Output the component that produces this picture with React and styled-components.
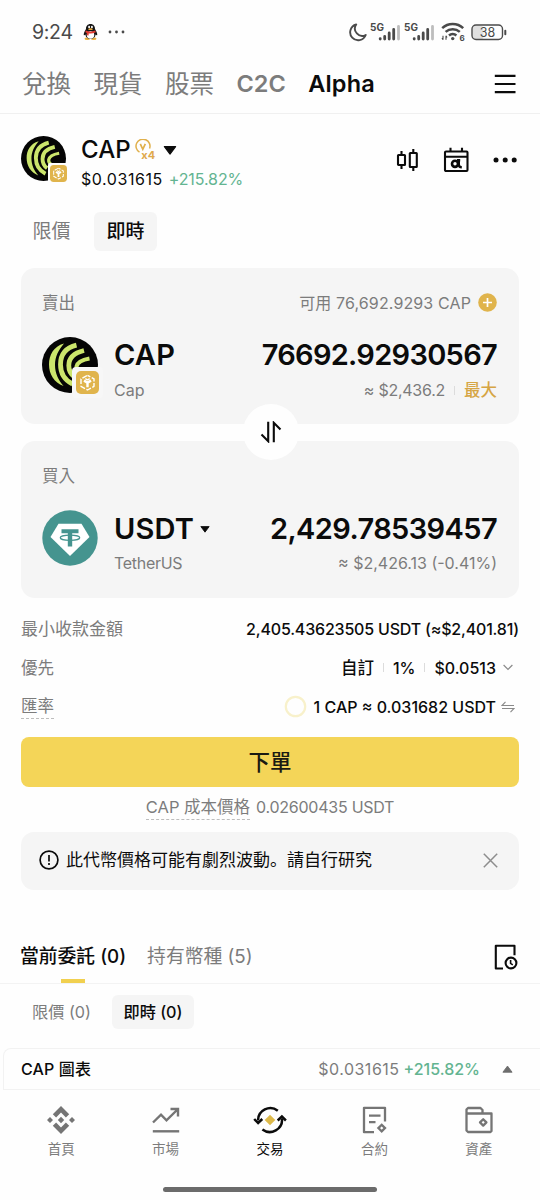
import React, { useState } from 'react';
import styled, { createGlobalStyle } from 'styled-components';

const GlobalStyle = createGlobalStyle`
  * {
    box-sizing: border-box;
  }

  body {
    margin: 0;
    background: #fefefe;
    color: #0b0b0b;
    font-family: Inter, 'Noto Sans CJK TC', sans-serif;
    font-size: 16px;
    -webkit-font-smoothing: antialiased;
  }

  svg {
    display: block;
    flex: none;
  }

  button {
    font: inherit;
    color: inherit;
    border: none;
    background: none;
    padding: 0;
    cursor: pointer;
  }
`;

const Screen = styled.div`
  width: 540px;
  height: 1200px;
  display: flex;
  flex-direction: column;
  overflow: hidden;
  background: #fefefe;
`;

const Text = styled.span`
  font-size: ${(p) => p.$size || 16}px;
  font-weight: ${(p) => p.$weight || 400};
  letter-spacing: ${(p) => p.$track || 0}px;
  color: ${(p) => p.$color || '#0b0b0b'};
  line-height: ${(p) => p.$line || 24}px;
  white-space: nowrap;
`;

const StatusBar = styled.div`
  height: 60px;
  padding: 4px 33px 0 32px;
  display: flex;
  align-items: center;
  justify-content: space-between;
`;

const StatusGroup = styled.div`
  display: flex;
  align-items: center;
  gap: ${(p) => p.$gap}px;
`;

const TopNav = styled.nav`
  height: 54px;
  padding: 0 24px 6px 22px;
  display: flex;
  align-items: center;
  border-bottom: 1px solid #f0f0f0;
`;

const NavItem = styled.button`
  margin-right: 22.5px;
  font-size: ${(p) => p.$size || 24.5}px;
  font-weight: ${(p) => p.$weight || 400};
  letter-spacing: ${(p) => p.$track || 0}px;
  line-height: 36px;
  color: ${(p) => (p.$active ? '#0b0b0b' : '#7c7c7c')};
`;

const Spacer = styled.div`
  flex: 1;
`;

const Header = styled.header`
  height: 98px;
  padding: 20px 22px 0 21px;
  display: flex;
  align-items: flex-start;
`;

const HeaderText = styled.div`
  margin-left: 15px;
  display: flex;
  flex-direction: column;
`;

const Row = styled.div`
  display: flex;
  align-items: center;
  gap: ${(p) => p.$gap || 0}px;
  padding-right: ${(p) => p.$end || 0}px;
`;

const HeaderIcons = styled.div`
  height: 52px;
  display: flex;
  align-items: center;
  gap: 24px;
`;

const LogoBox = styled.div`
  position: relative;
  width: ${(p) => p.$size}px;
  height: ${(p) => p.$size}px;
  margin-top: 2px;
`;

const ChainBadge = styled.div`
  position: absolute;
  right: ${(p) => p.$shift}px;
  bottom: ${(p) => p.$shift}px;
  padding: ${(p) => p.$ring}px;
  border-radius: ${(p) => p.$ring}px;
  background: ${(p) => p.$bg};
`;

const ModeTabs = styled.div`
  height: 39px;
  padding-left: 21px;
  display: flex;
`;

const ModeTab = styled.button`
  width: ${(p) => (p.$active ? 63 : 61)}px;
  margin-right: 12px;
  height: 39px;
  border-radius: 6px;
  font-size: 19px;
  line-height: 38px;
  font-weight: ${(p) => (p.$active ? 500 : 400)};
  color: ${(p) => (p.$active ? '#0b0b0b' : '#7c7c7c')};
  background: ${(p) => (p.$active ? '#f5f5f5' : 'transparent')};
`;

const Cards = styled.section`
  position: relative;
  margin: 17px 21px 0;
  display: flex;
  flex-direction: column;
  gap: 17px;
`;

const Card = styled.div`
  height: ${(p) => p.$height}px;
  padding: 22px 22px 0 21px;
  border-radius: 14px;
  background: #f5f5f5;
`;

const CardHead = styled.div`
  height: 25px;
  display: flex;
  align-items: center;
  justify-content: space-between;
`;

const CardBody = styled.div`
  margin-top: 20px;
  display: flex;
  align-items: flex-start;
`;

const CardCol = styled.div`
  display: flex;
  flex-direction: column;
  align-items: ${(p) => (p.$end ? 'flex-end' : 'flex-start')};
  margin-left: ${(p) => (p.$end ? 'auto' : '16px')};
  padding-top: ${(p) => p.$drop || 0}px;
  gap: ${(p) => 3 - (p.$drop || 0)}px;
`;

const Divider = styled.i`
  width: 1px;
  height: 9px;
  background: #dcdcdc;
`;

const SwapButton = styled.button`
  position: absolute;
  left: 50%;
  top: 136px;
  width: 56px;
  height: 56px;
  margin-left: -27.5px;
  border-radius: 50%;
  background: #fefefe;
  display: flex;
  align-items: center;
  justify-content: center;
`;

const Details = styled.section`
  margin: 11px 21px 0;
`;

const DetailRow = styled.div`
  height: 39px;
  display: flex;
  align-items: center;
  justify-content: space-between;
`;

const Dotted = styled.span`
  font-size: 16.5px;
  line-height: 24px;
  color: #7c7c7c;
  border-bottom: 1px dashed #bdbdbd;
`;

const Submit = styled.button`
  margin: 11px 21px 0;
  height: 50px;
  flex: none;
  border-radius: 8px;
  background: #f4d558;
  font-size: 21.5px;
  line-height: 50px;
  font-weight: 500;
  color: #1a1a12;
`;

const Cost = styled.div`
  height: 45px;
  padding-top: 8px;
  display: flex;
  align-items: flex-start;
  justify-content: center;
  gap: 6px;
`;

const Notice = styled.div`
  margin: 0 21px;
  height: 58px;
  padding: 0 21px 2px 18px;
  border-radius: 13px;
  background: #f5f5f5;
  display: flex;
  align-items: center;
`;

const NoticeText = styled.span`
  font-family: Inter, 'Noto Sans CJK SC', sans-serif;
  font-size: 17px;
  line-height: 24px;
  white-space: nowrap;
`;

const OrderTabs = styled.div`
  margin-top: 40px;
  height: 54px;
  padding: 0 22px 0 20px;
  display: flex;
  border-bottom: 1px solid #f3f3f3;
`;

const OrderTab = styled.button`
  position: relative;
  height: 53px;
  margin-right: 21px;
  font-size: 18.8px;
  line-height: 54px;
  font-weight: ${(p) => (p.$active ? 500 : 400)};
  color: ${(p) => (p.$active ? '#0b0b0b' : '#7c7c7c')};

  &::after {
    content: '';
    position: absolute;
    display: ${(p) => (p.$active ? 'block' : 'none')};
    left: 50%;
    bottom: 0;
    width: 24px;
    height: 4px;
    margin-left: -12px;
    background: #f1d04f;
  }
`;

const SubTabs = styled.div`
  height: 64px;
  padding: 11px 21px 0;
  display: flex;
`;

const SubTab = styled.button`
  width: ${(p) => (p.$active ? 82 : 81)}px;
  height: 34px;
  margin-right: 10px;
  border-radius: 6px;
  font-size: 16.2px;
  line-height: 34px;
  font-weight: ${(p) => (p.$active ? 500 : 400)};
  color: ${(p) => (p.$active ? '#0b0b0b' : '#7c7c7c')};
  background: ${(p) => (p.$active ? '#f5f5f5' : 'transparent')};
`;

const ChartBar = styled.div`
  height: 42px;
  padding: 0 27px 0 17px;
  margin: 0 0 0 3px;
  border: 1px solid #f2f2f2;
  border-right: none;
  border-radius: 8px 0 0 0;
  display: flex;
  align-items: center;
`;

const TabBar = styled.nav`
  height: 95px;
  padding: 16px 9px 0;
  display: flex;
`;

const TabItem = styled.button`
  flex: 1;
  display: flex;
  flex-direction: column;
  align-items: center;
  gap: 3px;
  font-size: 13.5px;
  line-height: 25px;
  color: ${(p) => (p.$active ? '#0b0b0b' : '#7c7c7c')};
`;

const HomeIndicator = styled.div`
  width: 214px;
  height: 5px;
  margin: 2px auto 0;
  border-radius: 3px;
  background: #6b6b6b;
`;

const Penguin = () => (
  <svg width="15" height="18" viewBox="0 0 16 18">
    <ellipse cx="4.6" cy="16.2" rx="3" ry="1.3" fill="#e9b03c" />
    <ellipse cx="11.4" cy="16.2" rx="3" ry="1.3" fill="#e9b03c" />
    <path d="M8 .4C4.9.4 3.1 2.8 3.2 5.8 2 8 .6 10 .8 12.2c.4.8 1.2 0 1.7-.6C3 14.6 5 16.4 8 16.4s5-1.8 5.5-4.8c.5.6 1.3 1.4 1.7.6.2-2.2-1.2-4.2-2.4-6.400C12.900 2.800 11.100.4 8 .4z" fill="#151515" />
    <ellipse cx="8" cy="12.2" rx="4" ry="3.9" fill="#fff" />
    <ellipse cx="6.5" cy="3.7" rx="1" ry="1.3" fill="#fff" />
    <ellipse cx="9.5" cy="3.7" rx="1" ry="1.3" fill="#fff" />
    <ellipse cx="8" cy="6" rx="2.4" ry=".9" fill="#e9a93c" />
    <path d="M2.9 7.5c3.2 1.6 7 1.6 10.2 0l.5 1.8c-2.5 1.3-5.1 1.6-7.6 1.2v2.2l-2-.2.1-2.5-1.6-.7z" fill="#e23c33" />
  </svg>
);

const StatusDots = () => (
  <svg width="17" height="4" viewBox="0 0 17 4" fill="#4a4a4a">
    <circle cx="2" cy="2" r="1.4" />
    <circle cx="8.5" cy="2" r="1.4" />
    <circle cx="15" cy="2" r="1.4" />
  </svg>
);

const Moon = () => (
  <svg width="18" height="19" viewBox="0 0 18 19" fill="none" stroke="#4a4a4a" strokeWidth="1.9" strokeLinejoin="round">
    <path d="M7.2 1.5A8 8 0 1 0 16.7 12 7.3 7.3 0 0 1 7.2 1.5z" />
  </svg>
);

const Signal = () => (
  <svg width="31" height="28" viewBox="0 -5 31 28">
    <text x="0" y="7.5" fontFamily="Inter, sans-serif" fontSize="10" fontWeight="700" fill="#4a4a4a">5G</text>
    <g strokeWidth="2.8" strokeLinecap="round" stroke="#4a4a4a">
      <path d="M10.2 15.6v.4M14.7 13.500v2.500M19.200 10v6M23.700 6.500v9.500" />
      <path d="M28.500 3.500v12.500" stroke="#bdbdbd" />
    </g>
  </svg>
);

const Wifi = () => (
  <svg width="30" height="28" viewBox="-3 -5 30 28" fill="none" stroke="#4a4a4a" strokeWidth="2.5">
    <path d="M1.200 5.200a15.400 15.400 0 0 1 21 0M4.600 8.900a10.600 10.600 0 0 1 14.200 0M8 12.500a5.600 5.600 0 0 1 7.400 0" />
    <circle cx="11.7" cy="15.6" r="1.7" fill="#4a4a4a" stroke="none" />
    <path d="M2 12.800v4M1 15l1 1.800M5 12.800v4M6 14.500l-1-1.700" strokeWidth="1.1" />
    <text x="18.500" y="17.500" fontFamily="Inter, sans-serif" fontSize="8" fontWeight="700" fill="#4a4a4a" stroke="none">6</text>
  </svg>
);

const Battery = () => (
  <svg width="36" height="17" viewBox="0 0 36 17">
    <rect x="1.5" y="1.5" width="11" height="14" rx="3.5" fill="#e0e0e0" />
    <rect x="1" y="1" width="30.5" height="14.5" rx="4" fill="none" stroke="#4a4a4a" strokeWidth="1.4" />
    <path d="M34.300 6.800v3.400" stroke="#4a4a4a" strokeWidth="2" strokeLinecap="round" />
    <text x="16.400" y="12.900" textAnchor="middle" fontFamily="Inter, sans-serif" fontSize="12.5" fill="#4a4a4a">38</text>
  </svg>
);

const MenuIcon = () => (
  <svg width="22" height="20" viewBox="0 0 22 20" stroke="#0b0b0b" strokeWidth="2.2">
    <path d="M.8 1.800h20.700M.8 10h20.700M.8 18.200h20.700" />
  </svg>
);

const CapLogo = ({ size }) => (
  <svg width={size} height={size} viewBox="0 0 56 56">
    <circle cx="28" cy="28" r="28" fill="#050505" />
    <path d="M22 6.500C11.500 9.500 7 18 7 27.500S12 45.500 21.500 49c-5-6-8.500-12.500-8.500-21S16.500 13 22 6.500z" fill="#cbe56c" />
    <g fill="none" stroke="#cbe56c" strokeWidth="4.8">
      <path d="M34.500 8.200C23 11 18.500 18.500 18.500 27.500c0 8.500 4 15.500 12 19.500" />
      <path d="M42 13.500C31.500 16 26.800 21 26.800 28.500c0 4.500 1.500 8.500 5.700 11.500" />
      <path d="M47.500 21.500C40 22.800 35.500 25 34.500 29.500c-.3 2 .5 4 2.500 5.500" strokeWidth="4" />
    </g>
  </svg>
);

const CubeIcon = ({ size }) => (
  <svg width={size} height={size} viewBox="0 0 23 23">
    <rect width="23" height="23" rx="5" fill="#e0b44c" />
    <g fill="none" stroke="#fff" strokeWidth="1.4" strokeLinejoin="round">
      <path d="M11.500 4.300l6.500 3.600v7.400l-6.500 3.700L5 15.300V7.900z" strokeDasharray="5.200 1.600" strokeDashoffset="2" />
      <path d="M8 9.600l3.500 2 3.500-2M11.500 11.600v4.600" strokeWidth="2.4" />
      <path d="M9.300 7.700l2.200 1.200 2.200-1.200" />
    </g>
  </svg>
);

const BoostIcon = () => (
  <svg width="21" height="22" viewBox="0 0 21 22">
    <path d="M4.500 13.200A7 7 0 1 1 14.600 9.500" fill="none" stroke="#e0b04c" strokeWidth="1.5" />
    <path d="M5.300 4.800l2.500 5.500 2.500-5.500" fill="none" stroke="#e0b04c" strokeWidth="1.7" />
    <text x="6.300" y="20.300" fontFamily="Inter, sans-serif" fontSize="11" fontWeight="700" fill="#e0a94c">x4</text>
  </svg>
);

const Caret = ({ width, height, color = '#0b0b0b', up }) => (
  <svg width={width} height={height} viewBox="0 0 12 8">
    <path
      d={up ? 'M1 7.5L6 .8l5 6.7z' : 'M1 .5h10L6 7.2z'}
      fill={color}
      stroke={color}
      strokeLinejoin="round"
    />
  </svg>
);

const CandlesIcon = () => (
  <svg width="23" height="24" viewBox="0 0 23 24" fill="none" stroke="#0b0b0b" strokeWidth="2.1">
    <rect x="2" y="7" width="7" height="10" rx=".5" />
    <rect x="13.8" y="5" width="7" height="14" rx=".5" />
    <path d="M5.500 3v4M5.500 17v4M17.300 1v4M17.300 19v4" />
  </svg>
);

const AlphaCalendar = () => (
  <svg width="26" height="26" viewBox="0 0 26 26" fill="none" stroke="#0b0b0b" strokeWidth="2.1">
    <rect x="2" y="4.5" width="22.5" height="19.5" rx="1" />
    <path d="M2 9.800h22.500M7.500.8v4M19 .8v4" />
    <ellipse cx="12" cy="16.800" rx="3" ry="3.100" strokeWidth="2.6" />
    <path d="M14 13.200h3.200M15.800 13v4.500c0 1.800.8 2.700 3 2.700" strokeWidth="2.4" />
  </svg>
);

const MoreIcon = () => (
  <svg width="25" height="6" viewBox="0 0 25 6" fill="#0b0b0b">
    <circle cx="3" cy="3" r="2.5" />
    <circle cx="12.2" cy="3" r="2.5" />
    <circle cx="21.2" cy="3" r="2.5" />
  </svg>
);

const PlusIcon = () => (
  <svg width="19" height="19" viewBox="0 0 19 19">
    <circle cx="9.5" cy="9.5" r="9.3" fill="#e0b44c" />
    <path d="M9.500 5v9M5 9.500h9" stroke="#fff" strokeWidth="1.7" />
  </svg>
);

const SwapIcon = () => (
  <svg width="22" height="22" viewBox="0 0 22 22" fill="none" stroke="#0b0b0b" strokeWidth="2.1">
    <path d="M1.500 13.500l6.700 6.700V.8M20.500 8.500l-6.700-6.700v19.500" />
  </svg>
);

const TetherLogo = () => (
  <svg width="56" height="56" viewBox="0 0 56 56">
    <circle cx="28" cy="28" r="27.7" fill="#45948f" />
    <path d="M16.500 13.800h23L47.500 27 28 46 8.500 27z" fill="#fff" />
    <path d="M19.500 19.300h17v3.900h-6.300v13.300h-4.400V23.200h-6.300z" fill="#45948f" />
    <ellipse cx="28" cy="27.7" rx="9.7" ry="2.6" fill="none" stroke="#45948f" strokeWidth="1.3" />
  </svg>
);

const Chevron = () => (
  <svg width="10" height="7" viewBox="0 0 10 7" fill="none" stroke="#8a8a8a" strokeWidth="1.2">
    <path d="M.6 1l4.400 4.400L9.400 1" />
  </svg>
);

const FlipIcon = () => (
  <svg width="14" height="12" viewBox="0 0 14 12" fill="none" stroke="#8a8a8a" strokeWidth="1.1">
    <path d="M4.500.8L1 4.500h12M9.500 11.200L13 7.500H1" />
  </svg>
);

const TimerRing = () => (
  <svg width="23" height="23" viewBox="0 0 23 23">
    <circle cx="11.5" cy="11.5" r="9.7" fill="none" stroke="#f8f1cb" strokeWidth="2.2" />
  </svg>
);

const AlertIcon = () => (
  <svg width="20" height="20" viewBox="0 0 20 20" fill="none" stroke="#0b0b0b" strokeWidth="1.7">
    <circle cx="10" cy="10" r="8.9" />
    <path d="M10 5v6.500M10 13v2" />
  </svg>
);

const CloseIcon = () => (
  <svg width="15" height="15" viewBox="0 0 15 15" stroke="#8d8d8d" strokeWidth="1.5">
    <path d="M.8.8l13.400 13.400M14.200.8L.8 14.200" />
  </svg>
);

const HistoryIcon = () => (
  <svg width="24" height="26" viewBox="0 0 24 26" fill="none" stroke="#0b0b0b" strokeWidth="2.1">
    <path d="M9 24.500H1.800V1.800h18.700v9.400" strokeLinejoin="round" />
    <circle cx="17" cy="19" r="5.4" />
    <path d="M16.600 15.900v3.500l2.200 1.400" strokeWidth="1.6" />
  </svg>
);

const HomeIcon = () => (
  <svg width="28" height="28" viewBox="0 0 28 28" fill="#757575">
    <path d="M14 0l8.200 8.200-3.300 3.300L14 6.600l-4.900 4.900-3.300-3.300zM14 28l8.200-8.200-3.300-3.300-4.900 4.900-4.900-4.900-3.300 3.300zM14 10.800l3.200 3.200-3.200 3.200-3.200-3.200zM3 11l3 3-3 3-3-3zM25 11l3 3-3 3-3-3z" />
  </svg>
);

const MarketIcon = () => (
  <svg width="28" height="28" viewBox="0 0 28 28" fill="none" stroke="#757575" strokeWidth="2.4">
    <path d="M1 16.500l8-7.800 5.500 5.600L25.500 3.500M18.500 3h7.500v7.500" />
    <path d="M.8 25.300h26.400" />
  </svg>
);

const TradeIcon = () => (
  <svg width="34" height="28" viewBox="0 0 34 28" fill="none" stroke="#0b0b0b" strokeWidth="2.5">
    <path d="M24.800 4.700A12.300 12.300 0 0 0 5 14.500M9.400 23.500A12.300 12.300 0 0 0 29 12.500" />
    <path d="M1.200 13l3.900 4 4.200-4M24.700 14.500l4.200-4 4 4" />
    <path d="M17 8.700l5.300 5.300-5.300 5.300-5.300-5.300z" fill="#ddb94a" stroke="none" />
  </svg>
);

const FuturesIcon = () => (
  <svg width="28" height="28" viewBox="0 0 28 28" fill="none" stroke="#757575" strokeWidth="2.3">
    <path d="M14 26.200H4V1.800h21v13.600" strokeLinejoin="round" />
    <path d="M9 9.700h11.500M9 16.200h6.500" />
    <path d="M21.700 18.800l3.300 3.300-3.300 3.300-3.300-3.300z" />
  </svg>
);

const AssetsIcon = () => (
  <svg width="28" height="28" viewBox="0 0 28 28" fill="none" stroke="#757575" strokeWidth="2.3" strokeLinejoin="round">
    <path d="M1.500 7v17.500L3 26h22.500l1-1V7.500h-25v-4L3 2h12.500l2 2v3.500" />
    <path d="M18.200 13.200l3.200 3.200-3.200 3.200-3.200-3.200z" />
  </svg>
);

const tabs = [
  { label: '首頁', Icon: HomeIcon },
  { label: '市場', Icon: MarketIcon },
  { label: '交易', Icon: TradeIcon },
  { label: '合約', Icon: FuturesIcon },
  { label: '資產', Icon: AssetsIcon },
];

const GRAY = '#7c7c7c';
const GREEN = '#63b491';

const App = () => {
  const [tab, setTab] = useState('交易');

  return (
    <>
      <GlobalStyle />
      <Screen>
        <StatusBar>
          <StatusGroup $gap={10}>
            <Text $size={19.5} $track={-0.3} $color="#4a4a4a">9:24</Text>
            <Penguin />
            <StatusDots />
          </StatusGroup>
          <StatusGroup $gap={3}>
            <Moon />
            <Signal />
            <Signal />
            <Wifi />
            <Battery />
          </StatusGroup>
        </StatusBar>

        <TopNav>
          <NavItem>兌換</NavItem>
          <NavItem>現貨</NavItem>
          <NavItem>股票</NavItem>
          <NavItem $size={23.5} $weight={600}>C2C</NavItem>
          <NavItem $size={23.5} $weight={600} $track={0.15} $active>Alpha</NavItem>
          <Spacer />
          <MenuIcon />
        </TopNav>

        <Header>
          <LogoBox $size={45}>
            <CapLogo size={45} />
            <ChainBadge $shift={-3} $ring={2} $bg="#fefefe">
              <CubeIcon size={17} />
            </ChainBadge>
          </LogoBox>
          <HeaderText>
            <Row $gap={4}>
              <Text $size={24} $weight={500} $track={0.1} $line={32}>CAP</Text>
              <Row $gap={7}>
                <BoostIcon />
                <Caret width={14} height={9} />
              </Row>
            </Row>
            <Row $gap={6}>
              <Text $track={0.55} $line={27}>$0.031615</Text>
              <Text $track={-0.1} $line={27} $color={GREEN}>+215.82%</Text>
            </Row>
          </HeaderText>
          <Spacer />
          <HeaderIcons>
            <CandlesIcon />
            <AlphaCalendar />
            <MoreIcon />
          </HeaderIcons>
        </Header>

        <ModeTabs>
          <ModeTab>限價</ModeTab>
          <ModeTab $active>即時</ModeTab>
        </ModeTabs>

        <Cards>
          <Card $height={156}>
            <CardHead>
              <Text $size={16.5} $color={GRAY}>賣出</Text>
              <Row $gap={7}>
                <Text $color={GRAY} $track={0.12}>可用 76,692.9293 CAP</Text>
                <PlusIcon />
              </Row>
            </CardHead>
            <CardBody>
              <LogoBox $size={56}>
                <CapLogo size={56} />
                <ChainBadge $shift={-5} $ring={4} $bg="#f7f7f7">
                  <CubeIcon size={23} />
                </ChainBadge>
              </LogoBox>
              <CardCol>
                <Text $size={29} $weight={600} $line={40} $track={0.2}>CAP</Text>
                <Text $color={GRAY}>Cap</Text>
              </CardCol>
              <CardCol $end>
                <Text $size={29} $weight={600} $line={40} $track={-0.7}>76692.92930567</Text>
                <Row $gap={9}>
                  <Text $color={GRAY} $track={-0.25}>≈ $2,436.2</Text>
                  <Divider />
                  <Text $size={16.5} $weight={500} $color="#d6a544">最大</Text>
                </Row>
              </CardCol>
            </CardBody>
          </Card>
          <Card $height={157}>
            <CardHead>
              <Text $size={16.5} $color={GRAY}>買入</Text>
            </CardHead>
            <CardBody>
              <LogoBox $size={56}>
                <TetherLogo />
              </LogoBox>
              <CardCol $drop={1}>
                <Row $gap={6}>
                  <Text $size={29} $weight={600} $line={40} $track={0.2}>USDT</Text>
                  <Caret width={10} height={7} />
                </Row>
                <Text $color={GRAY} $track={-0.3}>TetherUS</Text>
              </CardCol>
              <CardCol $end $drop={1}>
                <Text $size={29} $weight={600} $line={40} $track={-0.6}>2,429.78539457</Text>
                <Text $color={GRAY}>≈ $2,426.13 (-0.41%)</Text>
              </CardCol>
            </CardBody>
          </Card>
          <SwapButton>
            <SwapIcon />
          </SwapButton>
        </Cards>

        <Details>
          <DetailRow>
            <Text $size={17} $color={GRAY}>最小收款金額</Text>
            <Text $weight={500} $track={-0.19}>2,405.43623505 USDT (≈$2,401.81)</Text>
          </DetailRow>
          <DetailRow>
            <Text $size={16.5} $color={GRAY}>優先</Text>
            <Row $gap={9} $end={6}>
              <Text $size={16.5} $weight={500}>自訂</Text>
              <Divider />
              <Text $weight={500}>1%</Text>
              <Divider />
              <Row $gap={7}>
                <Text $weight={500}>$0.0513</Text>
                <Chevron />
              </Row>
            </Row>
          </DetailRow>
          <DetailRow>
            <Dotted>匯率</Dotted>
            <Row $gap={5} $end={4}>
              <Row $end={2}>
                <TimerRing />
              </Row>
              <Text $weight={500}>1 CAP ≈ 0.031682 USDT</Text>
              <FlipIcon />
            </Row>
          </DetailRow>
        </Details>

        <Submit>下單</Submit>
        <Cost>
          <Dotted>CAP 成本價格</Dotted>
          <Text $color={GRAY} $track={-0.25}>0.02600435 USDT</Text>
        </Cost>

        <Notice>
          <Row $gap={7}>
            <AlertIcon />
            <NoticeText>此代幣價格可能有劇烈波動。請自行研究</NoticeText>
          </Row>
          <Spacer />
          <CloseIcon />
        </Notice>

        <OrderTabs>
          <OrderTab $active>當前委託 (0)</OrderTab>
          <OrderTab>持有幣種 (5)</OrderTab>
          <Spacer />
          <Row>
            <HistoryIcon />
          </Row>
        </OrderTabs>
        <SubTabs>
          <SubTab>限價 (0)</SubTab>
          <SubTab $active>即時 (0)</SubTab>
        </SubTabs>

        <ChartBar>
          <Text $weight={500} $track={0.15}>CAP 圖表</Text>
          <Spacer />
          <Row $gap={22}>
            <Row $gap={4}>
              <Text $color={GRAY} $track={0.5}>$0.031615</Text>
              <Text $color={GREEN} $weight={500}>+215.82%</Text>
            </Row>
            <Caret width={11} height={8} color="#6e6e6e" up />
          </Row>
        </ChartBar>

        <TabBar>
          {tabs.map(({ label, Icon }) => (
            <TabItem key={label} $active={tab === label} onClick={() => setTab(label)}>
              <Icon />
              {label}
            </TabItem>
          ))}
        </TabBar>
        <HomeIndicator />
      </Screen>
    </>
  );
};

export default App;
